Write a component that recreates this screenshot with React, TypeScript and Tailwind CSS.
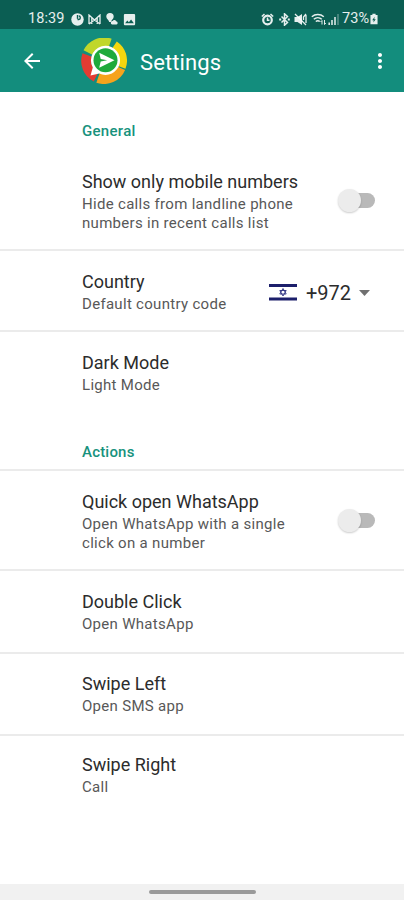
import type { ReactNode } from "react";
import { MdArrowBack, MdImage, MdMoreVert } from "react-icons/md";

function Logo() {
  return (
    <svg className="h-[46px] w-[46px]" viewBox="0 0 46 46">
      <g fill="none" strokeWidth="10">
        <path d="M7 14.500A18 18 0 0 1 29 5.500" stroke="#c0d72a" />
        <path d="M33 7.600A18 18 0 0 1 39.800 29" stroke="#f4d60f" />
        <path d="M39.500 30A18 18 0 0 1 17 40" stroke="#f6a31c" />
        <path d="M15 39A18 18 0 0 1 6.200 17" stroke="#e33b32" />
      </g>
      <path
        d="M24.500 7.700a14.600 14.600 0 1 1-6.300 27.800L9.500 37.500l2.300-8A14.600 14.600 0 0 1 24.500 7.700z"
        fill="#fff"
      />
      <circle cx="24.500" cy="22.300" r="12" fill="#1faa3c" />
      <path d="M18.200 14.800l15.300 7.500-15.300 7.500 1.500-6.200 6.500-1.300-6.500-1.300z" fill="#fff" />
    </svg>
  );
}

function StatusBar() {
  return (
    <div className="flex h-[29px] items-center bg-[#0b5e53] pt-[9px] pr-[26px] pl-[28px] text-white/90">
      <span className="w-[43px] text-[14.5px] leading-5 tracking-[0.1px]">18:39</span>
      <svg className="h-[13px] w-[13px]" viewBox="0 0 13 13">
        <circle cx="6.500" cy="6.500" r="6.200" fill="currentColor" />
        <path d="M6.500 2v3.800M6.500 6.500h1.300c2 0 2-3.500 0-3.500" fill="none" stroke="#0b5e53" strokeWidth="1.400" />
      </svg>
      <svg className="ml-[4px] h-[11px] w-[13px]" viewBox="0 0 13 11">
        <path
          d="M1 10V1l5.500 5L12 1v9M3.800 4v6M9.200 4v6M1 10l5.500-4L12 10"
          fill="none"
          stroke="currentColor"
          strokeWidth="1.300"
        />
      </svg>
      <svg className="ml-[5px] h-[12px] w-[12px]" viewBox="0 0 12 12">
        <path d="M4 0a3.700 3.700 0 0 1 3.700 3.700C7.700 6 5 7 5 9H3.200C3.200 7 .3 6 .3 3.700A3.700 3.700 0 0 1 4 0z" fill="currentColor" />
        <path d="M6 11.500a1.800 1.800 0 0 1 .6-3.500 2 2 0 0 1 3.500.2 1.700 1.700 0 0 1 .4 3.300z" fill="currentColor" />
      </svg>
      <MdImage className="ml-[4px] h-[15px] w-[15px]" />
      <div className="flex flex-1 items-center justify-end">
        <svg className="h-[13px] w-[13px]" viewBox="0 0 13 13">
          <circle cx="6.500" cy="7" r="4.300" fill="none" stroke="currentColor" strokeWidth="2.200" />
          <path d="M6.500 4.500V7.200h2M.8 3.500L3.500 1M12.200 3.500L9.500 1" fill="none" stroke="currentColor" strokeWidth="1.500" />
        </svg>
        <svg className="ml-[5px] h-[13px] w-[11px]" viewBox="0 0 11 13">
          <path
            d="M2.500 3.500l6 6-3 2.700V.800l3 2.700-6 6"
            fill="none"
            stroke="currentColor"
            strokeWidth="1.500"
          />
          <path d="M.2 6.500h2M8.800 6.500h2" stroke="currentColor" strokeWidth="1.800" />
        </svg>
        <svg className="ml-[4px] h-[13px] w-[13px]" viewBox="0 0 13 13">
          <path d="M.5 4h3l4.500-3v11L3.500 9h-3z" fill="currentColor" />
          <path d="M1 1l11 11M12 1L9.500 4v3M12 2v8" fill="none" stroke="currentColor" strokeWidth="1.300" />
        </svg>
        <svg className="ml-[4px] h-[12px] w-[15px]" viewBox="0 0 15 12">
          <path
            d="M.8 3.800a9 9 0 0 1 12 0M2.800 6.200a6 6 0 0 1 8 0M4.800 8.500a3.200 3.200 0 0 1 4 0"
            fill="none"
            stroke="currentColor"
            strokeWidth="1.500"
          />
          <path d="M11 11.500V7.500l-1.500 1.500M13.500 7v4.500l1.300-1.500" fill="none" stroke="currentColor" />
        </svg>
        <svg className="ml-[2px] h-[12px] w-[11px]" viewBox="0 0 11 12">
          <path d="M1.200 12V9.500M4 12V7M7 12V4" stroke="currentColor" strokeWidth="1.500" />
          <path d="M10 12V1" stroke="currentColor" strokeOpacity=".35" strokeWidth="1.500" />
        </svg>
        <span className="ml-[3px] text-[14.5px] leading-5">73%</span>
        <svg className="ml-[1px] h-[12px] w-[8px]" viewBox="0 0 9 12">
          <path d="M2.700 0h3.600v1.500H8.500V12H.5V1.500h2.200z" fill="currentColor" />
          <path d="M5.200 3.500L2.500 7.300h1.700L3.800 10l2.700-3.800H4.800z" fill="#0b5e53" />
        </svg>
      </div>
    </div>
  );
}

function Flag() {
  return (
    <svg className="h-[19px] w-[28px]" viewBox="0 0 28 19">
      <path fill="#fff" d="M0 0h28v19H0z" />
      <path fill="#1c1f6b" d="M0 1h28v3H0zM0 14.500h28v3H0z" />
      <path d="M14 5.500l3.200 5.500h-6.400zM14 13l-3.200-5.500h6.400z" fill="none" stroke="#2b2f80" strokeWidth=".9" />
    </svg>
  );
}

function Toggle() {
  return (
    <div className="flex h-6 w-[37px] items-center">
      <div className="z-10 h-[23px] w-[23px] shrink-0 rounded-full bg-[#ececec] shadow-[0_1px_2px_rgba(0,0,0,0.2)]" />
      <div className="-ml-[12px] h-[15px] w-[26px] shrink-0 rounded-full bg-[#b9b9b9]" />
    </div>
  );
}

type RowProps = {
  title: string;
  children: ReactNode;
  className: string;
  action?: ReactNode;
};

function Row({ title, children, className, action }: RowProps) {
  return (
    <div className={`flex pr-[29px] pl-[82px] ${className}`}>
      <div className="flex-1 whitespace-nowrap">
        <h3 className="text-[18px] leading-6 text-[#2c2c2c]">{title}</h3>
        <p className="pt-px text-[15px] leading-[19px] tracking-[0.3px] text-[#585858]">{children}</p>
      </div>
      {action}
    </div>
  );
}

export default function App() {
  return (
    <div className="flex h-[900px] w-[404px] flex-col overflow-hidden bg-white font-['Roboto',sans-serif]">
      <StatusBar />

      <header className="flex h-[63px] items-center bg-[#138d7d] pr-[12px] pl-[20px] text-white">
        <MdArrowBack className="h-6 w-6" />
        <div className="ml-[37px]">
          <Logo />
        </div>
        <h1 className="ml-[13px] flex-1 pt-[4px] text-[22px] leading-7 tracking-[0.1px]">Settings</h1>
        <MdMoreVert className="h-6 w-6" />
      </header>

      <main className="flex-1">
        <h2 className="h-[59px] pt-[29px] pl-[82px] text-[15px] leading-5 font-medium tracking-[0.3px] text-[#17927d]">
          General
        </h2>
        <Row
          title="Show only mobile numbers"
          className="h-[100px] border-b-2 border-[#ebebeb] pt-[19px]"
          action={
            <div className="pt-[18px]">
              <Toggle />
            </div>
          }
        >
          Hide calls from landline phone
          <br />
          numbers in recent calls list
        </Row>
        <Row
          title="Country"
          className="h-[81px] border-b-2 border-[#ebebeb] pt-[19px]"
          action={
            <div className="flex items-center self-start pt-[8px] pr-[5px]">
              <Flag />
              <span className="ml-[9px] pt-px text-[20px] leading-7 text-[#2c2c2c]">+972</span>
              <svg className="ml-[8px] h-[6px] w-[11px]" viewBox="0 0 11 6">
                <path d="M0 0h11L5.500 6z" fill="#707070" />
              </svg>
            </div>
          }
        >
          Default country code
        </Row>
        <Row title="Dark Mode" className="h-[81px] pt-[19px]">
          Light Mode
        </Row>
        <h2 className="h-[58px] border-b-2 border-[#ebebeb] pt-[29px] pl-[82px] text-[15px] leading-5 font-medium tracking-[0.2px] text-[#17927d]">
          Actions
        </h2>
        <Row
          title="Quick open WhatsApp"
          className="h-[100px] border-b-2 border-[#ebebeb] pt-[19px]"
          action={
            <div className="pt-[18px]">
              <Toggle />
            </div>
          }
        >
          Open WhatsApp with a single
          <br />
          click on a number
        </Row>
        <Row title="Double Click" className="h-[83px] border-b-2 border-[#ebebeb] pt-[19px]">
          Open WhatsApp
        </Row>
        <Row title="Swipe Left" className="h-[82px] border-b-2 border-[#ebebeb] pt-[18px]">
          Open SMS app
        </Row>
        <Row title="Swipe Right" className="h-[81px] pt-[17px]">
          Call
        </Row>
      </main>

      <footer className="flex h-[16px] justify-center bg-[#f1f1f1] pt-[6px]">
        <div className="h-[4px] w-[107px] rounded-full bg-[#9a9a9a]" />
      </footer>
    </div>
  );
}
